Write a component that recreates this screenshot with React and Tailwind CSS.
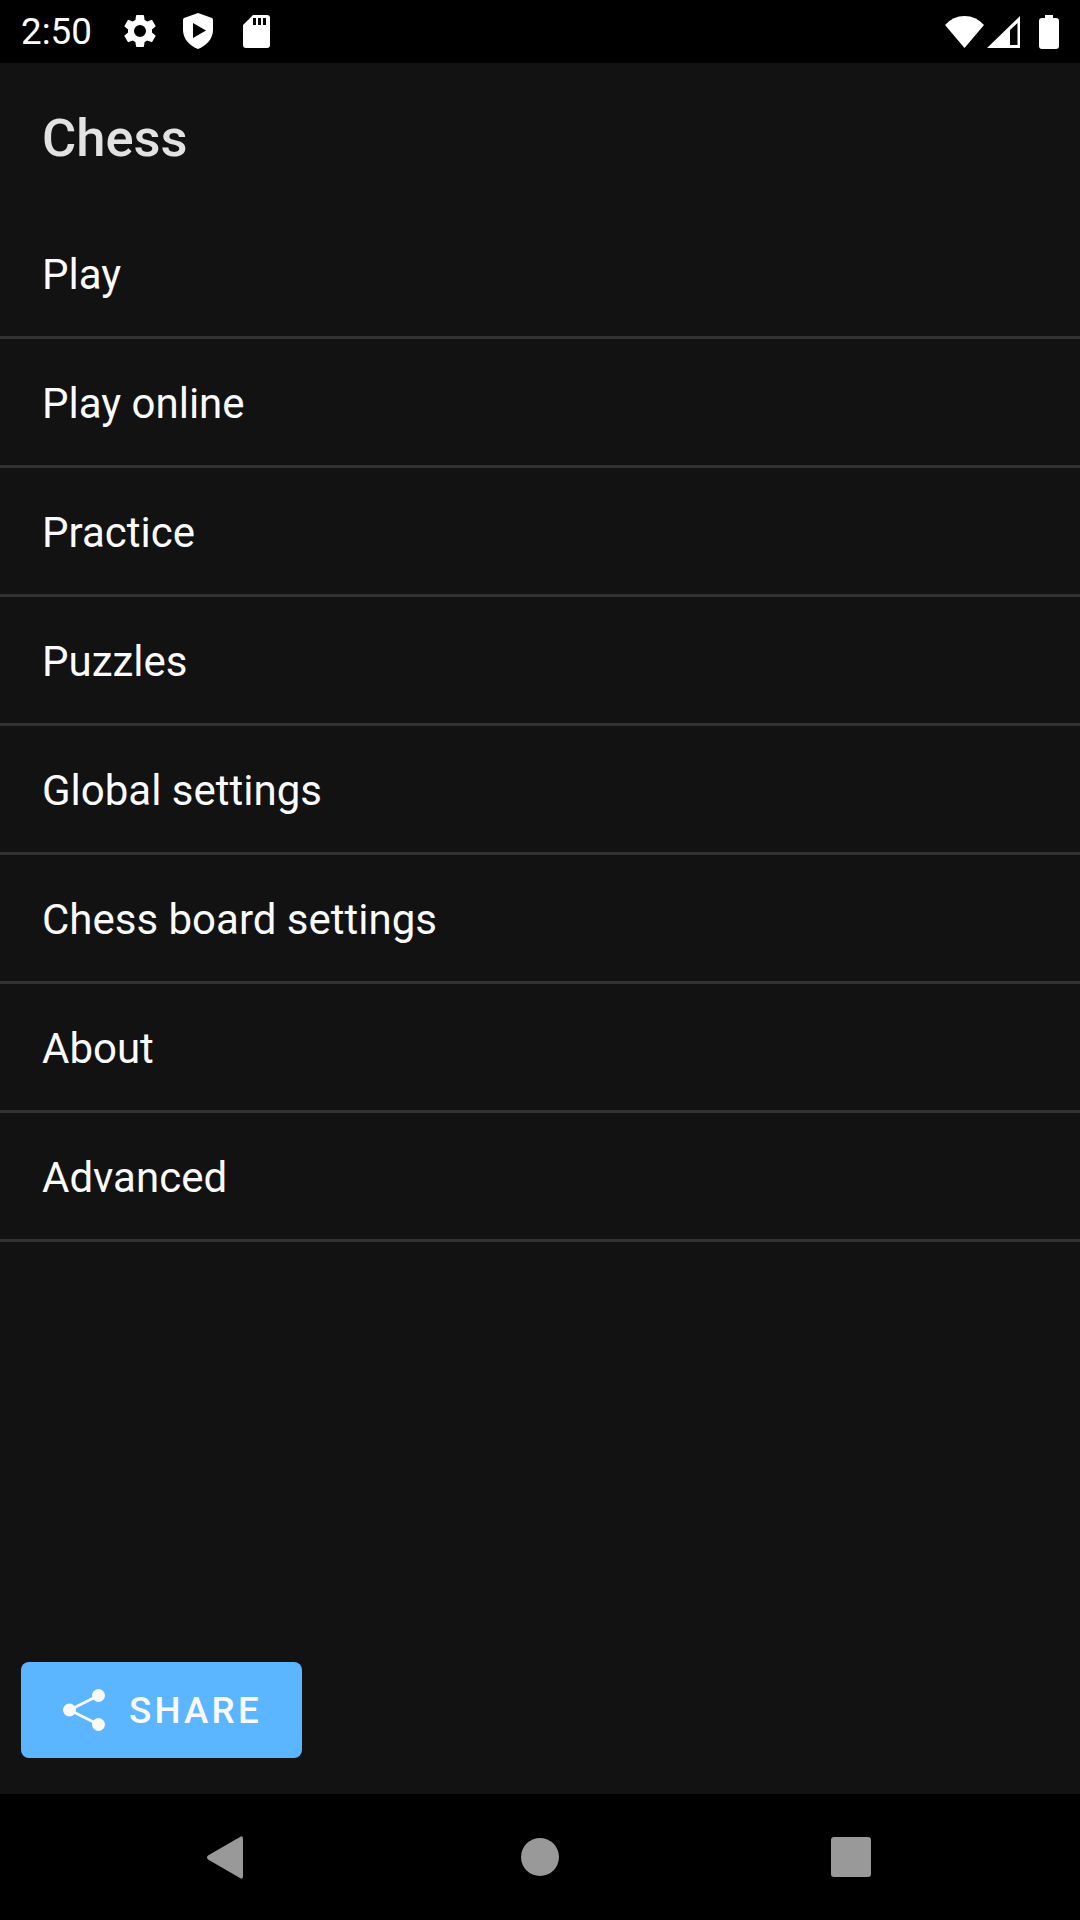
const items = ["Play","Play online","Practice","Puzzles","Global settings","Chess board settings","About","Advanced"];

export default function App() {
  return (
    <div className="w-[1080px] h-[1920px] flex flex-col bg-[#121212] overflow-hidden font-['Roboto',sans-serif]">
      <div className="h-[63px] shrink-0 bg-black flex items-center text-white">
        <span className="ml-[21px] w-[99px] text-[36.75px] leading-[63px] font-normal">2:50</span>
        <svg className="w-[40px] h-[40px] -mt-[2px]" viewBox="0 0 24 24" fill="#fff"><path d="M19.14 12.94c.04-.3.06-.61.06-.94s-.02-.64-.07-.94l2.03-1.58a.49.49 0 0 0 .12-.61l-1.92-3.32a.49.49 0 0 0-.59-.22l-2.39.96a7 7 0 0 0-1.62-.94l-.36-2.54a.48.48 0 0 0-.48-.41h-3.84a.47.47 0 0 0-.47.41l-.36 2.54c-.59.24-1.13.57-1.62.94l-2.39-.96a.48.48 0 0 0-.59.22L2.74 8.87a.47.47 0 0 0 .12.61l2.03 1.58c-.05.3-.09.63-.09.94s.02.64.07.94l-2.03 1.58a.49.49 0 0 0-.12.61l1.92 3.32c.12.22.37.29.59.22l2.39-.96c.5.38 1.03.7 1.62.94l.36 2.54c.05.24.24.41.48.41h3.84c.24 0 .44-.17.47-.41l.36-2.54c.59-.24 1.13-.56 1.62-.94l2.39.96c.22.08.47 0 .59-.22l1.92-3.32a.47.47 0 0 0-.12-.61l-2.01-1.58zM12 15.6A3.6 3.6 0 1 1 12 8.4a3.6 3.6 0 0 1 0 7.2z"/></svg>
        <svg className="ml-[23px] w-[30px] h-[36px] -mt-[1px]" viewBox="0 0 30 36"><path fill="#fff" fillRule="evenodd" d="M15 0 L29 5 Q30 5.5 30 7 V17 C30 26 23 33 15 36 C7 33 0 26 0 17 V7 Q0 5.500 1 5 Z M10 10 V25 L23 17.500 Z"/></svg>
        <svg className="ml-[30px] w-[27px] h-[33px] -mt-[1px]" viewBox="0 0 27 33"><path fill="#fff" fillRule="evenodd" d="M10 0 H24 Q27 0 27 3 V30 Q27 33 24 33 H3 Q0 33 0 30 V10 Z M10 3 V10 H13 V3 Z M15 3 V10 H18 V3 Z M20 3 V10 H23 V3 Z"/></svg>
        <div className="ml-auto flex items-center">
          <svg className="w-[39px] h-[32px]" viewBox="0 0 39 32"><path fill="#fff" d="M19.500 32 L0 9 Q8 0 19.500 0 Q31 0 39 9 Z"/></svg>
          <svg className="ml-[3px] w-[33px] h-[32px]" viewBox="0 0 33 32"><path fill="#fff" fillRule="evenodd" d="M33 0 V32 H0 Z M30.500 7 L23 14 V29 H30.500 Z"/></svg>
          <svg className="ml-[19px] mr-[21px] w-[20px] h-[34px]" viewBox="0 0 20 34"><path fill="#fff" d="M6 0 H14 V3 H17 Q20 3 20 6 V31 Q20 34 17 34 H3 Q0 34 0 31 V6 Q0 3 3 3 H6 Z"/></svg>
        </div>
      </div>
      <div className="flex-1 flex flex-col">
        <div className="h-[147px] shrink-0 pl-[42px] pt-[44px] text-[52.5px] leading-[62px] font-medium text-[#e2e2e2]">Chess</div>
        {items.map((t) => (
          <div key={t} className="h-[129px] shrink-0 pl-[42px] pt-[2px] flex items-center text-[42px] text-[#fafafa] border-b-[3px] border-[#323232]">{t}</div>
        ))}
        <button className="mt-auto mb-[36px] ml-[21px] w-[281px] h-[96px] rounded-[8px] bg-[#5cb5ff] flex items-center pl-[42px] text-[#fafafa]">
          <svg className="w-[42px] h-[42px]" viewBox="0 0 42 42"><g fill="#fafafa"><circle cx="6.500" cy="21" r="6.500"/><circle cx="35.500" cy="6.500" r="6.500"/><circle cx="35.500" cy="35.500" r="6.500"/></g><path d="M35.500 6.500 L6.500 21 L35.500 35.500" fill="none" stroke="#fafafa" strokeWidth="2.800"/></svg>
          <span className="ml-[24px] pt-[2px] text-[36.75px] font-medium tracking-[3.2px] leading-none">SHARE</span>
        </button>
      </div>
      <div className="h-[126px] shrink-0 bg-black flex items-center">
        <svg className="ml-[207px] w-[37px] h-[43px]" viewBox="0 0 37 43"><path fill="#999" d="M1 19.500 L33 1 Q36 -1 36 3 V40 Q36 44 33 42 L1 23.500 Q-1 21.500 1 19.500 Z"/></svg>
        <div className="ml-[277px] w-[38px] h-[38px] rounded-full bg-[#999]"></div>
        <div className="ml-[272px] w-[40px] h-[40px] rounded-[3px] bg-[#999]"></div>
      </div>
    </div>
  );
}
